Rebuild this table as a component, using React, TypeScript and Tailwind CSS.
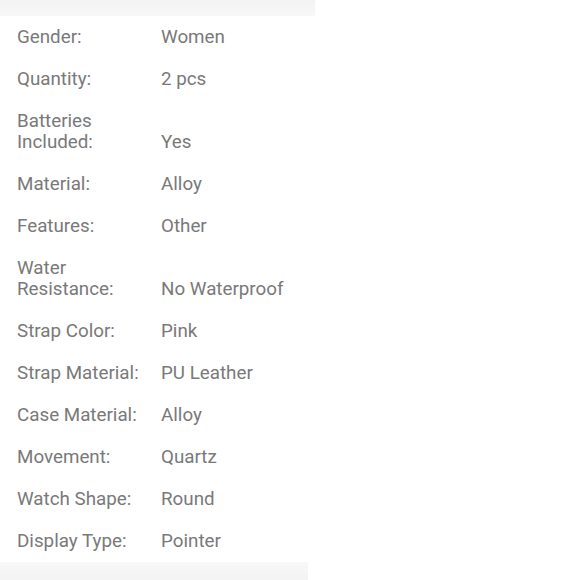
const specs: [string, string][] = [
  ['Gender:', 'Women'],
  ['Quantity:', '2 pcs'],
  ['Batteries Included:', 'Yes'],
  ['Material:', 'Alloy'],
  ['Features:', 'Other'],
  ['Water Resistance:', 'No Waterproof'],
  ['Strap Color:', 'Pink'],
  ['Strap Material:', 'PU Leather'],
  ['Case Material:', 'Alloy'],
  ['Movement:', 'Quartz'],
  ['Watch Shape:', 'Round'],
  ['Display Type:', 'Pointer'],
];

export default function App() {
  return (
    <div className="w-[580px] h-[580px] bg-white overflow-hidden font-['Roboto',sans-serif] text-[18.8px] leading-[21px] text-[#797979]">
      <div className="h-[16px] w-[315px] bg-gradient-to-b from-[#f3f3f3] to-[#f8f8f8]" />
      <div className="flex flex-col">
        {specs.map(([label, value]) => (
          <div key={label} className="grid grid-cols-[161px_1fr] items-end py-[10.5px]">
            <div className="pl-[17px] pr-[14px]">{label}</div>
            <div>{value}</div>
          </div>
        ))}
      </div>
      <div className="h-[18px] w-[308px] bg-gradient-to-b from-[#f8f8f8] to-[#f3f3f3]" />
    </div>
  );
}
